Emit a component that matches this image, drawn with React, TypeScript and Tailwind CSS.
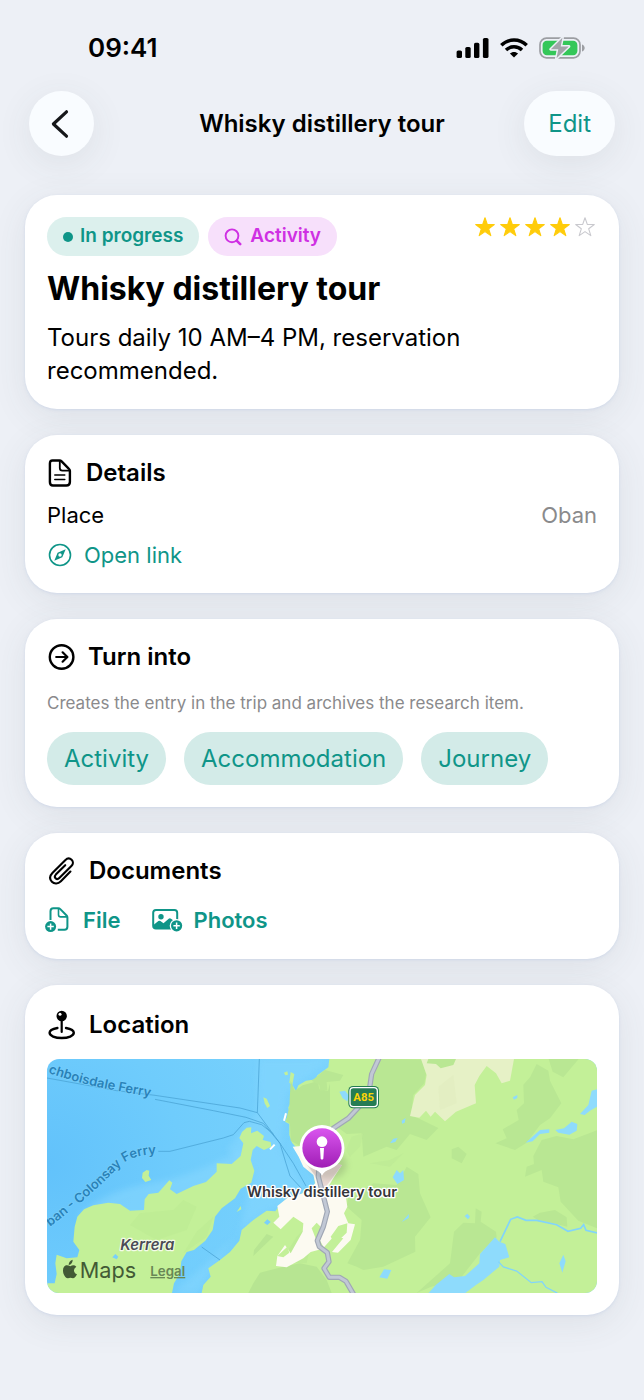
import React from "react";

interface CardProps {
  children: React.ReactNode;
}

interface SectionTitleProps {
  icon: React.ReactNode;
  title: string;
}

const RATING = 4;
const targets: string[] = ["Activity", "Accommodation", "Journey"];

const STAR_PATH =
  "M10 0.8 L12.3 7.4 L19.3 7.5 L13.7 11.8 L15.8 18.6 L10 14.6 L4.2 18.6 L6.3 11.8 L0.7 7.5 L7.7 7.4 Z";

function Card({ children }: CardProps) {
  return (
    <section className="rounded-[32px] bg-white p-[22px] shadow-[0_1px_3px_rgba(195,207,230,0.6),0_8px_36px_rgba(70,80,75,0.09)]">
      {children}
    </section>
  );
}

function SectionTitle({ icon, title }: SectionTitleProps) {
  return (
    <div className="flex h-8 items-center gap-[13px]">
      {icon}
      <h2 className="text-2xl font-semibold">{title}</h2>
    </div>
  );
}

function StatusBar() {
  return (
    <div className="flex h-[91px] items-center justify-between pt-1 pr-[59px] pl-[88px]">
      <span className="text-[26px] leading-8 font-semibold">09:41</span>
      <div className="flex items-center gap-[11px]">
        {/* Signal */}
        <svg width="33" height="20" viewBox="0 0 33 20" fill="#000">
          <rect x="0.6" y="12.5" width="5.4" height="7.5" rx="1.6" />
          <rect x="9.3" y="9" width="5.4" height="11" rx="1.6" />
          <rect x="18" y="4.8" width="5.4" height="15.2" rx="1.6" />
          <rect x="26.9" y="0" width="5.6" height="20" rx="1.6" />
        </svg>
        {/* Wifi */}
        <svg width="28" height="20" viewBox="0 0 28 20" fill="none" stroke="#000" strokeWidth="3.5">
          <path d="M1.3 7.3 C8.4 0.3 19.6 0.3 26.7 7.3" />
          <path d="M6 12 C10.5 7.8 17.5 7.8 22 12" />
          <path d="M14 19.6 L9.9 15.5 C12.1 13.4 15.9 13.4 18.1 15.5 Z" fill="#000" stroke="none" />
        </svg>
        {/* Battery */}
        <svg width="46" height="22" viewBox="0 0 46 22">
          <rect x="1" y="1.2" width="40" height="19.6" rx="6.5" fill="none" stroke="#9c9ea3" strokeWidth="1.7" />
          <path d="M43 7.5 C46.6 8.6 46.6 13.4 43 14.5 Z" fill="#9c9ea3" />
          <rect x="3.6" y="3.7" width="34.8" height="14.6" rx="4.2" fill="#34c759" />
          <path
            d="M23.4 0.8 L11.8 12.2 H19.3 L17.5 21.3 L29.8 9.4 H21.7 Z"
            fill="#a3a5aa"
            stroke="#edf0f6"
            strokeWidth="3"
            strokeLinejoin="round"
            paintOrder="stroke"
          />
        </svg>
      </div>
    </div>
  );
}

function FileTextIcon() {
  return (
    <svg width="26" height="30" viewBox="0 0 26 30" fill="none" stroke="currentColor" strokeWidth="2.4" strokeLinejoin="round" strokeLinecap="round">
      <path d="M5.5 2.5 H12.5 Q13.7 2.5 14.6 3.4 L21.7 10.6 Q22.9 11.5 22.9 12.8 V24 Q22.9 27.5 19.3 27.5 H5.9 Q2.9 27.5 2.9 24 V5.7 Q2.9 2.5 5.5 2.5 Z" />
      <path d="M12.8 2.8 V10 Q12.8 12.6 15.4 12.6 H22.3" strokeWidth="1.8" />
      <path d="M7.8 17 H17.8 M7.8 21.4 H17.8" strokeWidth="1.5" />
    </svg>
  );
}

function ArrowCircleIcon() {
  return (
    <svg className="ml-px" width="27" height="28" viewBox="0 0 27 28" fill="none" stroke="currentColor" strokeWidth="2.4" strokeLinecap="round" strokeLinejoin="round">
      <circle cx="13.6" cy="14" r="11.8" />
      <path d="M8.2 14 H19.2 M14.6 9.3 L19.4 14 L14.6 18.7" strokeWidth="2.2" />
    </svg>
  );
}

function PaperclipIcon() {
  return (
    <svg className="ml-px" width="28" height="30" viewBox="0 0 28 30" fill="none" stroke="currentColor" strokeWidth="2.1" strokeLinecap="round">
      <path d="M22.4 15.6 L12.9 25.2 C10 28.1 6.3 28.2 3.9 25.7 C1.5 23.2 1.7 19.8 4.4 17 L17.2 4.2 C19.2 2.2 21.8 2 23.6 3.8 C25.4 5.6 25.3 8.2 23.4 10.1 L11.3 22.1 C10.1 23.3 8.6 23.3 7.6 22.3 C6.5 21.2 6.7 19.8 7.8 18.6 L17.2 9.2" />
    </svg>
  );
}

function MapPinIcon() {
  return (
    <svg className="ml-px" width="28" height="30" viewBox="0 0 28 30" fill="none" stroke="currentColor" strokeLinecap="round">
      <path d="M9.4 18 C4.7 18.8 1.6 20.6 1.6 22.8 C1.6 25.8 7 28 13.7 28 S25.8 25.8 25.8 22.8 C25.8 20.6 22.7 18.8 18 18" strokeWidth="2.4" />
      <path d="M13.7 9 V22" strokeWidth="2.2" />
      <circle cx="13.7" cy="6" r="5.2" fill="currentColor" stroke="none" />
      <circle cx="12" cy="4.2" r="1.5" fill="#fff" stroke="none" />
    </svg>
  );
}

function CompassIcon() {
  return (
    <svg width="25" height="24" viewBox="0 0 25 24" fill="none" stroke="currentColor">
      <circle cx="13" cy="12" r="10.5" strokeWidth="1.6" />
      <path d="M18.7 6.2 L10.6 9.7 L7.3 17.8 L15.3 14.3 Z" fill="currentColor" stroke="none" />
      <circle cx="13" cy="12" r="1.7" fill="#fff" stroke="none" />
    </svg>
  );
}

function AddFileIcon() {
  return (
    <svg width="26" height="28" viewBox="0 0 26 28" fill="none" stroke="currentColor" strokeWidth="2" strokeLinejoin="round">
      <path d="M5.5 14 V5.2 Q5.5 2.2 8.4 2.2 H13.3 Q14.4 2.2 15.3 3.1 L21.6 9.5 Q22.4 10.3 22.4 11.5 V20.8 Q22.4 23.8 19.4 23.8 H12.8" />
      <path d="M13.5 2.6 V8.7 Q13.5 10.9 15.7 10.9 H22" strokeWidth="1.6" />
      <circle cx="5.6" cy="20.6" r="5.5" fill="currentColor" stroke="none" />
      <path d="M5.6 17.4 V23.8 M2.4 20.6 H8.8" stroke="#fff" strokeWidth="1.5" />
    </svg>
  );
}

function AddPhotoIcon() {
  return (
    <svg width="31" height="24" viewBox="0 0 31 24" fill="none">
      <rect x="1.2" y="2" width="24" height="18.6" rx="2.8" stroke="currentColor" strokeWidth="2" />
      <circle cx="9" cy="8.8" r="2.7" fill="currentColor" />
      <path d="M2 16.5 L6.4 13 Q7.4 12.3 8.4 13 L11.5 15.2 L16.7 10.7 Q17.9 9.8 19 10.7 L25 15 V20.5 H2 Z" fill="currentColor" />
      <circle cx="24.6" cy="17.8" r="6.9" fill="#fff" />
      <circle cx="24.6" cy="17.8" r="5.6" fill="currentColor" />
      <path d="M24.6 14.6 V21 M21.4 17.8 H27.8" stroke="#fff" strokeWidth="1.5" />
    </svg>
  );
}

function Stars() {
  return (
    <div className="flex h-5 gap-[5px] pr-[2px]" role="img" aria-label="4 out of 5">
      {[1, 2, 3, 4, 5].map((n) => (
        <svg key={n} width="20" height="20" viewBox="0 0 20 20">
          <path
            d={STAR_PATH}
            fill={n <= RATING ? "#ffcc0a" : "none"}
            stroke={n <= RATING ? "#ffcc0a" : "#c9c9ce"}
            strokeWidth="1.1"
            strokeLinejoin="round"
          />
        </svg>
      ))}
    </div>
  );
}

function LocationMap() {
  return (
    <svg
      className="mt-4 block h-[234px] w-full rounded-[12px] font-['Inter','Liberation_Sans',sans-serif]"
      viewBox="21 27 1650 702"
      preserveAspectRatio="xMidYMid slice"
    >
      <defs>
        <radialGradient id="sea" gradientUnits="userSpaceOnUse" cx="20" cy="340" r="900">
          <stop offset="0" stopColor="#62c2fb" />
          <stop offset="0.45" stopColor="#6fccfc" />
          <stop offset="1" stopColor="#7bd3fd" />
        </radialGradient>
        <linearGradient id="pin" x1="0" y1="0" x2="0" y2="1">
          <stop offset="0" stopColor="#d955ee" />
          <stop offset="1" stopColor="#a01eb6" />
        </linearGradient>
        <filter id="soft" x="-50%" y="-50%" width="200%" height="200%">
          <feGaussianBlur stdDeviation="10" />
        </filter>
        <path id="route-north" d="M24 68 Q120 102 210 118 L400 154" />
        <path id="route-south" d="M30 530 L60 507 L130 451 L190 397 L238 350 Q272 312 365 312 L420 312" />
      </defs>

      <rect x="0" y="0" width="1700" height="760" fill="url(#sea)" />
      <path d="M655 27 H870 L740 130 L720 300 L800 420 L640 510 L500 640 L400 729 H470 L600 540 L640 360 L560 300 L650 190 Z" fill="#86d7fe" opacity="0.55" filter="url(#soft)" />
      <path d="M110 500 Q200 420 330 400 T600 300 L640 370 L520 430 L320 500 Z" fill="#8bd9fe" opacity="0.5" filter="url(#soft)" />

      {/* Kerrera island */}
      <path
        d="M132 478 L160 466 L205 458 L240 462 L270 482 L312 480 L314 448 L326 432 L355 428 L388 391 L397 398 L390 418 L410 432 L460 408 L498 396 L530 365 L530 340 L575 342 L602 318 L610 280 L598 264 L606 246 L620 233 L634 232 L633 250 L652 242 L672 258 L668 270 L692 276 L694 290 L672 300 L650 288 L638 300 L632 330 L643 362 L634 398 L602 416 L585 445 L545 475 L525 500 L518 540 L496 572 L462 600 L440 606 L424 634 L420 670 L402 700 L396 729 H21 L22 700 L44 700 L50 672 L46 640 L50 614 L80 625 L112 622 L118 600 L100 575 L104 530 L112 500 Z"
        fill="#c3f098"
      />
      <path d="M270 525 L300 490 L400 480 L430 450 L470 470 L440 540 L350 570 Z M430 610 L470 545 L520 500 L500 560 Z" fill="#b9e892" opacity="0.4" />
      <path d="M308 368 L320 360 L328 362 L326 377 L334 390 L316 396 L306 384 Z M670 142 L680 146 L690 168 L682 174 L674 160 Z M732 68 L742 64 L744 74 L736 76 Z M590 486 L602 468 L604 478 Z" fill="#c3f098" />
      <path d="M217 622 L226 612 L235 620 L230 628 Z" fill="#79cffb" />

      {/* Mainland */}
      <path
        d="M868 27 L865 52 L832 76 L828 88 L798 92 L775 106 L768 124 L759 108 L748 98 L752 66 L763 72 L758 100 L754 125 L757 150 L745 172 L748 188 L735 215 L748 222 L748 255 L756 278 L775 300 L778 322 L812 350 L822 375 L825 404 L795 420 L778 438 L745 442 L722 462 L706 484 L680 482 L640 510 L605 540 L598 572 L570 606 L540 630 L505 655 L512 680 L490 705 L485 729 H1700 V27 Z"
        fill="#c3f098"
      />
      <path d="M752 92 L764 122 L788 106 L824 96 L832 85 L838 118 L864 122 L870 100 V280 L810 270 L780 288 L752 272 L750 222 L738 212 L748 170 Z" fill="#b7e592" />
      <path d="M660 668 L730 650 L780 640 L830 650 L860 690 L875 729 H625 L640 700 Z M642 600 L680 552 L700 560 L640 618 Z" fill="#b7e592" />
      <path d="M720 640 L770 560 L830 500 L800 640 Z" fill="#b9e892" opacity="0.6" />
      <path d="M672 518 L682 508 L692 516 L682 525 Z" fill="#79cffb" />

      {/* Woodland and hills */}
      <g transform="translate(810 0)">
        <path d="M210 27 L335 29 L348 72 L343 100 L310 135 L303 198 L325 205 L385 234 L350 270 L300 252 L260 300 L230 290 L160 320 L155 250 L110 252 L75 226 L120 200 L135 165 L182 105 Z" fill="#b9e793" />
        <path d="M5 92 L45 60 L100 75 L90 92 L50 96 L52 120 L30 122 L28 105 Z M355 29 H438 L395 55 L380 42 Z" fill="#b9e793" />
        <path d="M640 104 L660 82 L680 42 L715 62 L720 92 L754 160 L720 205 L690 225 L650 278 L615 300 L556 280 L590 265 L578 238 L626 210 L620 180 L642 160 Z M716 27 H806 L760 82 L728 65 Z" fill="#b9e793" />
        <path d="M670 318 L695 270 L740 258 L790 268 L862 240 V535 L805 512 L752 455 L745 412 L700 395 L695 360 L645 380 L650 350 L672 342 Z" fill="#b9e793" />
        <path d="M425 298 L445 290 L470 312 L455 340 L425 325 Z M668 500 L690 488 L735 480 L770 502 L772 530 L740 522 L684 510 Z" fill="#b9e793" />
        <path d="M130 440 L190 400 L260 405 L290 350 L325 372 L330 430 L362 502 L315 560 L316 605 L220 650 L160 660 L140 650 L112 640 L150 570 L155 510 L110 470 L115 440 Z" fill="#b9e793" />
        <path d="M432 545 L460 518 L495 520 L497 475 L515 485 L512 515 L558 545 L560 562 L510 610 L455 680 L360 712 L320 729 L420 640 Z" fill="#b9e793" />
        <path d="M333 27 H612 L600 92 L575 100 L558 70 L530 48 L508 78 L494 105 L498 160 L438 185 L405 214 L375 185 L362 200 L348 182 L328 203 L300 198 L315 135 L345 105 L350 75 Z" fill="#e6f1c6" />
        <path d="M355 27 H438 L430 45 L392 55 L378 42 L350 40 Z" fill="#b9e793" />
        <path d="M385 110 L430 75 L440 160 L390 180 Z" fill="#dfecbc" opacity="0.4" />
        <path d="M125 260 L160 250 L150 290 L120 320 L108 300 Z M180 340 L240 330 L280 310 L240 350 Z" fill="#bdea95" opacity="0.7" />
      </g>

      {/* Lakes and streams */}
      <g transform="translate(810 0)" fill="#8edbfc">
        <path d="M88 125 L105 122 L118 138 L112 154 L98 145 Z M275 212 L287 204 L284 218 L276 221 Z M240 280 L250 266 L263 264 L256 276 Z M248 382 L260 360 L270 370 L280 360 L282 390 L262 402 Z M275 516 L297 492 L296 504 Z M464 498 L472 491 L480 500 L474 508 Z M208 682 L222 658 L244 660 L232 686 Z M608 142 L622 135 L622 144 L612 149 Z M647 278 L690 240 L718 238 L718 248 L690 252 L668 274 Z M736 240 L762 235 L785 215 L802 222 L800 242 L778 254 L745 248 Z M810 192 L835 165 L845 122 L861 118 V170 L840 182 L824 195 Z M748 640 L760 614 L767 634 L757 668 Z" />
        <path d="M356 729 L378 704 L418 672 L432 682 L465 678 L508 640 L510 612 L555 562 L568 575 L586 582 L598 622 L570 630 L568 650 L520 690 L498 705 L466 729 Z" />
        <path d="M570 575 L602 508 L622 501 L648 511 L680 511 L740 524 L774 544 L812 535 L821 524 L828 541 L862 549" fill="none" stroke="#82d4fb" strokeWidth="5" />
        <path d="M565 635 L580 651 L620 663 L664 698 L696 695 L708 712 L742 729" fill="none" stroke="#82d4fb" strokeWidth="4" />
      </g>

      {/* Town */}
      <path d="M758 290 L785 288 L850 340 L906 345 L880 385 L856 425 L916 430 L922 470 L912 490 L925 520 L945 523 L932 570 L894 608 L876 606 L910 565 L880 560 L848 596 L812 606 L790 625 L740 652 L708 648 L712 618 L735 585 L752 610 L788 545 L790 520 L760 500 L722 538 L700 518 L718 500 L712 468 L745 442 L790 430 L826 400 L820 375 L790 350 L776 320 Z" fill="#fcfaf1" />
      <path d="M815 535 L830 518 L842 530 L834 560 L850 590 L832 578 Z M872 560 L895 528 L922 520 L920 548 L885 582 Z" fill="#c3f098" />
      <path d="M712 618 L742 590 L748 608 L730 622 Z" fill="#c3f098" />
      <path d="M790 330 L870 338 L906 345 L880 380 L850 420 L828 380 Z" fill="#ead9d4" />
      <path d="M690 298 L704 284 M738 190 L732 212" stroke="#fff" strokeWidth="6" fill="none" />

      {/* Ferry routes */}
      <g fill="none" stroke="#4ba5d6" strokeWidth="2.4">
        <path d="M658 27 L652 188 L720 280 L760 340 L798 408" />
        <path d="M21 84 L230 122 L345 136 L600 174 L652 188" />
        <path d="M345 148 L520 182 L618 202 L670 220 L720 280 L738 340 L750 378 L785 416" />
        <path d="M355 304 H390 L550 264 L580 254 L612 218 L628 214 L665 224 L700 252" />
        <path d="M485 591 L540 630" />
      </g>

      {/* A85 */}
      <g fill="none" strokeLinejoin="round" strokeLinecap="round">
        <path d="M1018 22 L995 72 L985 140 L925 205 L880 235 L840 300 L835 380 L848 430 L862 485 L850 530 L832 572 L838 590 L862 608 L867 635 L852 655 L868 682 L898 682 L918 694 L942 735" stroke="#a0a7b5" strokeWidth="16" />
        <path d="M1018 22 L995 72 L985 140 L925 205 L880 235 L840 300 L835 380 L848 430 L862 485 L850 530 L832 572 L838 590 L862 608 L867 635 L852 655 L868 682 L898 682 L918 694 L942 735" stroke="#c1c8d5" strokeWidth="9" />
      </g>
      <rect x="925" y="108" width="92" height="67" rx="14" fill="#257c54" />
      <rect x="930" y="113" width="82" height="57" rx="10" fill="#257c54" stroke="#fff" strokeWidth="4" />
      <text x="971" y="154" textAnchor="middle" fill="#fdd406" fontSize="34" fontWeight="700" className="font-['Roboto','Liberation_Sans',sans-serif]">A85</text>

      {/* Labels */}
      <g fill="#2a82b8" stroke="#79cffb" strokeWidth="4" paintOrder="stroke" fontSize="39" fontWeight="600">
        <text>
          <textPath href="#route-north">chboisdale Ferry</textPath>
        </text>
        <text>
          <textPath href="#route-south">ban - Colonsay Ferry</textPath>
        </text>
      </g>
      <text x="322" y="599" textAnchor="middle" fontSize="45" fontWeight="600" fontStyle="italic" fill="#4b4b55" stroke="#f4fbe9" strokeWidth="7" strokeLinejoin="round" paintOrder="stroke">
        Kerrera
      </text>

      {/* Marker */}
      <ellipse cx="866" cy="345" rx="54" ry="42" fill="#5d6652" opacity="0.22" filter="url(#soft)" />
      <path d="M846 225 A69 69 0 0 1 870 358 Q854 362 846 377 Q838 362 822 358 A69 69 0 0 1 846 225 Z" fill="#fff" />
      <circle cx="846" cy="294" r="59" fill="url(#pin)" />
      <circle cx="846" cy="275" r="16" fill="#fff" />
      <path d="M840 294 H852 L850 326 Q846 331 842 326 Z" fill="#fff" />
      <text x="846" y="442" textAnchor="middle" fontSize="44" fontWeight="600" fill="#35353a" stroke="#fff" strokeWidth="8" strokeLinejoin="round" paintOrder="stroke">
        Whisky distillery tour
      </text>

      {/* Attribution */}
      <g fill="#425a35">
        <path d="M98 629 Q98 642 86 645 Q86 633 98 629 Z M91 649 Q101 642 109 650 Q99 657 103 666 Q105 671 111 673 Q105 685 99 685 Q91 681 84 685 Q75 685 70 670 Q66 651 78 646 Q85 645 91 649 Z" />
        <text x="119" y="684" fontSize="65">Maps</text>
      </g>
      <a href="#legal">
        <text x="331" y="678" fontSize="40" fontWeight="600" fill="#688755" textDecoration="underline">Legal</text>
      </a>
    </svg>
  );
}

function App() {
  return (
    <div className="min-h-screen bg-[#edf0f6] pb-20 font-['Inter','Liberation_Sans',sans-serif] text-black">
      <StatusBar />

      {/* Header */}
      <header className="grid grid-cols-[1fr_auto_1fr] items-center px-[29px]">
        <button
          aria-label="Back"
          className="flex size-[65px] items-center justify-center rounded-full bg-[#f9fcff] pr-[3px] shadow-[0_8px_36px_rgba(70,80,75,0.09)]"
        >
          <svg width="20" height="30" viewBox="0 0 20 30" fill="none" stroke="#16171a" strokeWidth="3.2" strokeLinecap="round" strokeLinejoin="round">
            <path d="M16.5 2.8 L3.4 15 L16.5 27.2" />
          </svg>
        </button>
        <h1 className="text-2xl font-semibold">Whisky distillery tour</h1>
        <button className="h-[65px] justify-self-end rounded-full bg-[#f9fcff] px-6 text-2xl text-[#0f9588] shadow-[0_8px_36px_rgba(70,80,75,0.09)]">
          Edit
        </button>
      </header>

      <main className="mt-[39px] flex flex-col gap-[26px] px-[25px]">
        <Card>
          <div className="flex items-start justify-between">
            <div className="flex gap-[9px]">
              <span className="flex h-[39px] items-center gap-[7px] rounded-full bg-[#dcf0ed] px-4 text-[19px] font-semibold text-[#0f9588]">
                <span className="size-[10px] rounded-full bg-[#0f9588]" />
                In progress
              </span>
              <span className="flex h-[39px] items-center gap-2 rounded-full bg-[#f7e0fb] px-4 text-[19px] font-semibold text-[#cf30e3]">
                <svg width="18" height="18" viewBox="0 0 18 18" fill="none" stroke="currentColor" strokeLinecap="round">
                  <circle cx="8" cy="7.8" r="6.4" strokeWidth="1.9" />
                  <path d="M12.9 12.8 L16.2 16.1" strokeWidth="2.6" />
                </svg>
                Activity
              </span>
            </div>
            <Stars />
          </div>
          <h2 className="mt-3 text-[32px] leading-[41px] font-bold">Whisky distillery tour</h2>
          <p className="mt-3 max-w-[460px] text-2xl leading-[33px]">
            Tours daily 10 AM–4 PM, reservation recommended.
          </p>
        </Card>

        <Card>
          <SectionTitle icon={<FileTextIcon />} title="Details" />
          <div className="mt-[10px] flex h-8 items-center justify-between text-[22px]">
            <span>Place</span>
            <span className="text-[#8a8a8c]">Oban</span>
          </div>
          <a href="#link" className="mt-2 flex h-8 items-center gap-3 text-[22px] text-[#0f9588]">
            <CompassIcon />
            Open link
          </a>
        </Card>

        <Card>
          <SectionTitle icon={<ArrowCircleIcon />} title="Turn into" />
          <p className="mt-[18px] text-[17px] leading-6 text-[#8a8a8c]">
            Creates the entry in the trip and archives the research item.
          </p>
          <div className="mt-[17px] flex flex-wrap gap-[18px]">
            {targets.map((target) => (
              <button
                key={target}
                className="h-[53px] rounded-full bg-[#d3ebe8] px-[17px] text-2xl text-[#0f9588]"
              >
                {target}
              </button>
            ))}
          </div>
        </Card>

        <Card>
          <SectionTitle icon={<PaperclipIcon />} title="Documents" />
          <div className="-ml-[2px] mt-4 flex h-[34px] items-center gap-8 text-[22px] font-semibold text-[#0f9588]">
            <button className="flex items-center gap-3">
              <AddFileIcon />
              File
            </button>
            <button className="flex items-center gap-[10px]">
              <AddPhotoIcon />
              Photos
            </button>
          </div>
        </Card>

        <Card>
          <div className="flex h-9 flex-col justify-center">
            <SectionTitle icon={<MapPinIcon />} title="Location" />
          </div>
          <LocationMap />
        </Card>
      </main>
    </div>
  );
}

export default App;
